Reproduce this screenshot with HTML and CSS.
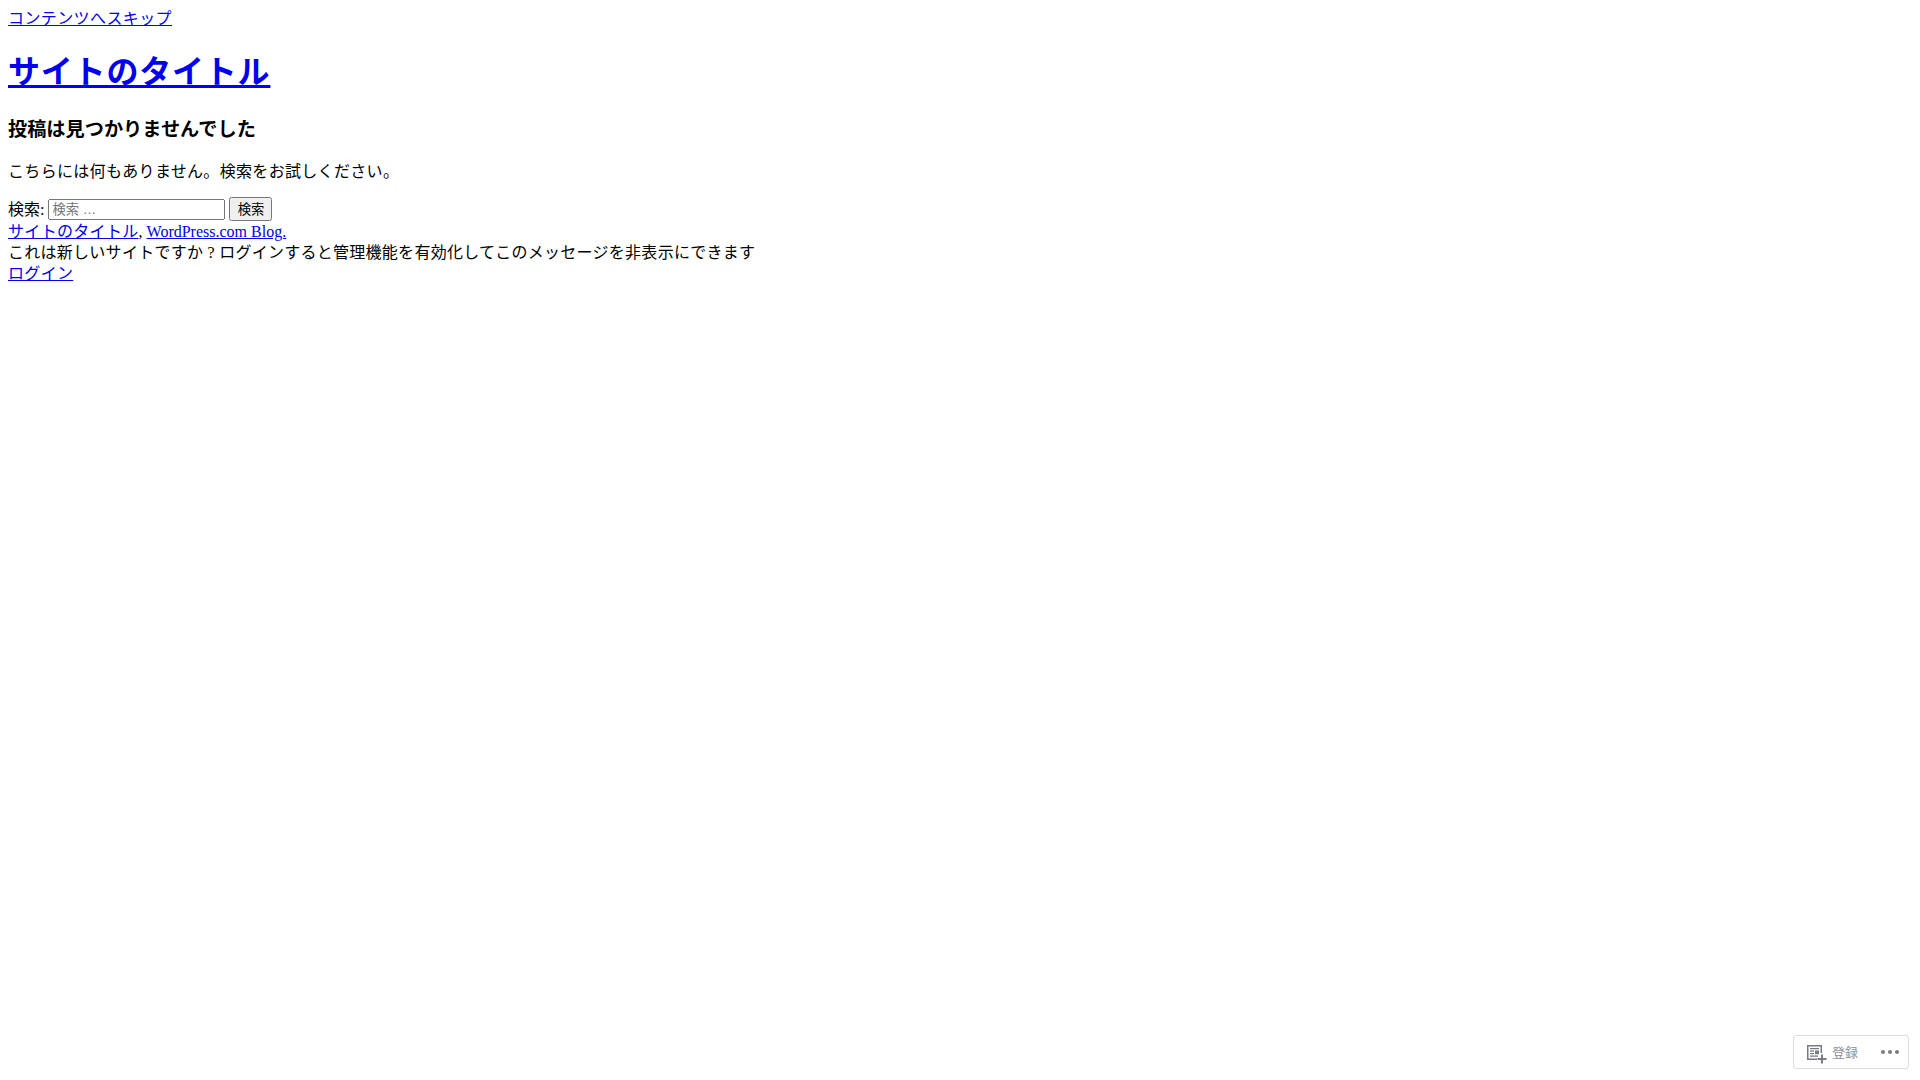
FILE: index.html
```html
<!DOCTYPE html>
<html lang="ja">
<head>
  <meta charset="UTF-8" />
  <meta name="viewport" content="width=device-width, initial-scale=1.0" />
  <title>サイトのタイトル</title>
  <link rel="stylesheet" href="styles.css">
</head>
<body>
  <a class="skip-link" href="#content">コンテンツへスキップ</a>

  <header class="site-header">
    <h1 class="site-title"><a href="#">サイトのタイトル</a></h1>
  </header>

  <main id="content">
    <h2 class="page-title">投稿は見つかりませんでした</h2>
    <p class="no-results">こちらには何もありません。検索をお試しください。</p>
    <form class="search-form">
      <label for="search-field">検索:</label>
      <input id="search-field" class="search-field" type="search" placeholder="検索 …" />
      <input class="search-submit" type="submit" value="検索" />
    </form>
  </main>

  <footer class="site-footer">
    <div><a href="#">サイトのタイトル</a><span class="latin">, </span><a class="latin" href="#">WordPress.com Blog.</a></div>
    <div class="login-note">これは新しいサイトですか ? ログインすると管理機能を有効化してこのメッセージを非表示にできます</div>
    <div><a href="#">ログイン</a></div>
  </footer>

  <!-- 右下のアクションバー -->
  <div class="action-bar">
    <a class="action-follow" href="#">
      <svg class="bar-icon" viewBox="0 0 24 24"><path d="M3 5h15v8h-1.500V6.500h-12v12H13V20H3zM6 8h9v1.200H6zM6 10.500h4v1.200H6zM6 13h4v1.200H6zM6 15.500h8v1.200H6zM11 10.500h4v3.700h-4zM17 14.500h2V18h3.500v2H19v3.500h-2V20h-3.500v-2H17z"/></svg>
      <span>登録</span>
    </a>
    <a class="action-more" href="#">
      <svg class="bar-icon" viewBox="0 0 24 24"><path d="M7 12c0 1.104-.896 2-2 2s-2-.896-2-2 .896-2 2-2 2 .896 2 2zm12-2c-1.104 0-2 .896-2 2s.896 2 2 2 2-.896 2-2-.896-2-2-2zm-7 0c-1.104 0-2 .896-2 2s.896 2 2 2 2-.896 2-2-.896-2-2-2z"/></svg>
    </a>
  </div>
</body>
</html>
```

FILE: styles.css
```css
body {
  font-family: "Liberation Serif", "Noto Sans CJK JP", serif;
  line-height: 1.33;
  letter-spacing: 0.02em;
  background: #fff;
  color: #000;
}

.latin {
  letter-spacing: 0;
}

.skip-link {
  letter-spacing: 0.4px;
}

.site-title {
  font-size: 32px;
  letter-spacing: 0.8px;
}

.page-title {
  font-size: 19.2px;
  line-height: 30px;
  letter-spacing: 0;
}

.no-results {
  margin-bottom: 15px;
}

.search-form {
  letter-spacing: 0;
}

.search-field,
.search-submit {
  box-sizing: border-box;
  font-family: "Liberation Sans", "Noto Sans CJK JP", sans-serif;
}

.search-field {
  width: 177px;
  height: 21px;
}

.search-submit {
  width: 43px;
  height: 24px;
  padding: 0;
}

.login-note {
  letter-spacing: 0.27px;
}

.action-bar {
  position: fixed;
  right: 11px;
  bottom: 11px;
  display: flex;
  align-items: center;
  justify-content: space-between;
  width: 116px;
  height: 34px;
  box-sizing: border-box;
  padding: 0 6px 0 10px;
  background: #fff;
  border: 1px solid #dcdcde;
  border-radius: 3px;
  font-family: "Noto Sans CJK JP", sans-serif;
  font-size: 13px;
  letter-spacing: 0;
}

.action-bar a {
  display: flex;
  align-items: center;
  gap: 4px;
  color: #8c8f94;
  text-decoration: none;
}

.bar-icon {
  width: 24px;
  height: 24px;
  fill: #787c82;
}
```
